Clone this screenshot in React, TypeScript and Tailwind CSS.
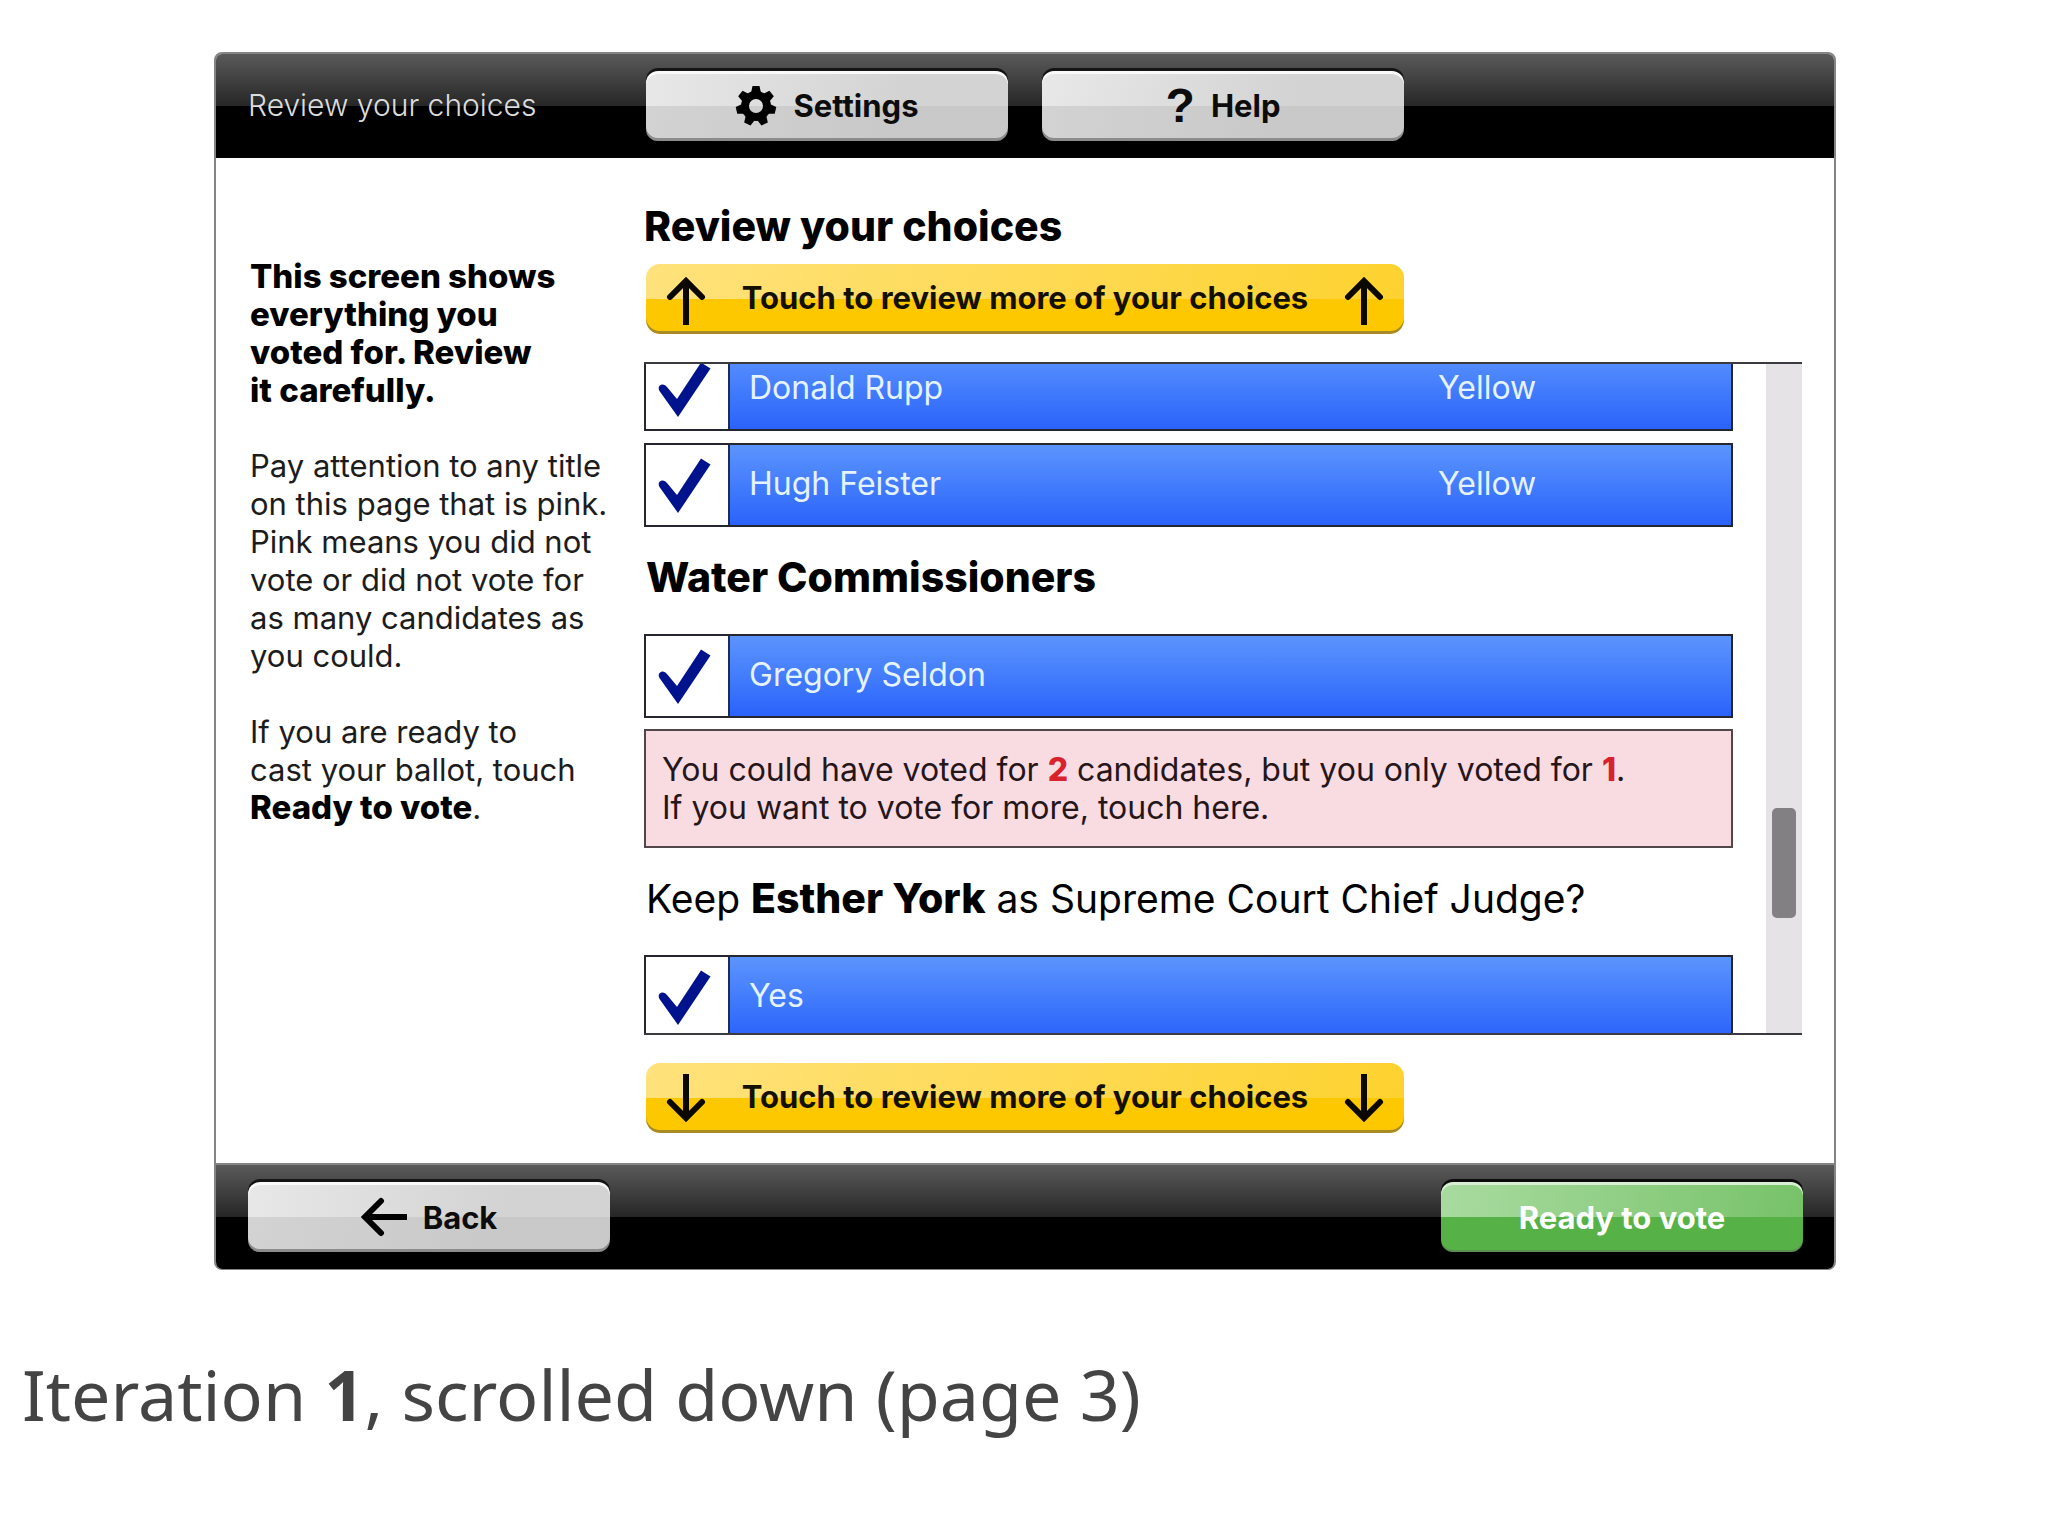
import type { ReactNode } from "react";

const teeth = Array.from({ length: 7 }, (_, i) => (i * 360) / 7);

function GearIcon() {
  return (
    <svg viewBox="0 0 42 42" className="h-[42px] w-[42px]" aria-hidden="true">
      <circle cx="21" cy="21" r="11" fill="none" stroke="#000" strokeWidth="8" />
      {teeth.map((a) => (
        <path key={a} d="M16 8 L17.5 1 H24.5 L26 8 Z" fill="#000" transform={`rotate(${a} 21 21)`} />
      ))}
    </svg>
  );
}

function BackArrow() {
  return (
    <svg viewBox="0 0 46 40" className="h-[40px] w-[46px]" fill="none" stroke="#000" strokeWidth="6" aria-hidden="true">
      <path d="M20 4 L4 20 L20 36" strokeLinecap="round" />
      <path d="M4 20 H46" />
    </svg>
  );
}

function VerticalArrow({ up }: { up?: boolean }) {
  return (
    <svg
      viewBox="0 0 40 48"
      className={up ? "mt-1 h-12 w-10" : "h-12 w-10 rotate-180"}
      fill="none"
      stroke="#0a0800"
      strokeWidth="6"
      aria-hidden="true"
    >
      <path d="M4 20 L20 4 L36 20" strokeLinecap="round" />
      <path d="M20 4 V48" />
    </svg>
  );
}

function BarButton({ children, green }: { children: ReactNode; green?: boolean }) {
  return (
    <button
      type="button"
      className={
        green
          ? "flex h-[70px] w-[362px] items-center justify-center rounded-xl bg-[linear-gradient(to_bottom,transparent_50%,#56b146_50%),linear-gradient(100deg,#a9dba0,#76c268)] text-[31px] leading-none font-bold text-white shadow-[inset_0_3px_0_#d8efd4,inset_0_-2px_0_#5c8f54,0_-3px_0_#0c0c0c]"
          : "flex h-[70px] w-[362px] items-center justify-center gap-4 rounded-xl bg-[linear-gradient(to_bottom,transparent_50%,rgba(190,190,190,0.5)_50%),linear-gradient(100deg,#e8e8e8,#d3d3d3_70%)] text-[31px] leading-none font-bold text-[#0c0c0c] shadow-[inset_0_3px_0_#fafafa,inset_0_-3px_0_#8c8c8c,0_-3px_0_#141414]"
      }
    >
      {children}
    </button>
  );
}

function MoreButton({ up }: { up?: boolean }) {
  return (
    <button
      type="button"
      className="ml-[2px] flex h-[70px] w-[758px] items-center justify-between rounded-[14px] bg-[linear-gradient(to_bottom,transparent_50%,#fdc800_50%),linear-gradient(100deg,#ffe27c,#fdd22f)] px-[20px] text-[31px] leading-none font-bold text-[#141000] shadow-[inset_0_-3px_0_#a88a26]"
    >
      <VerticalArrow up={up} />
      <span className="pb-[3px]">Touch to review more of your choices</span>
      <VerticalArrow up={up} />
    </button>
  );
}

function ChoiceRow({ name, party }: { name: string; party?: string }) {
  return (
    <label className="flex h-[84px] border-2 border-[#262630] bg-white text-[32px] text-[#e4f3ff]">
      <span className="grid w-[82px] place-items-center">
        <input type="checkbox" checked readOnly className="col-start-1 row-start-1 h-full w-full appearance-none" />
        <svg viewBox="2 1 60 60" className="pointer-events-none col-start-1 row-start-1 h-[60px] w-[60px]" aria-hidden="true">
          <path d="M4.500 33 Q2 28 7 26.500 Q10 26 12 29 L22 41 L46 4.500 L55.500 10.500 L23 59 Z" fill="#00138c" />
        </svg>
      </span>
      <span className="flex flex-1 items-center border-l-2 border-[#1c2a5c] bg-linear-to-b from-[#5c94fd] to-[#2b62fa] pb-[3px] pl-[19px]">
        <span className="flex-1">{name}</span>
        {party && <span className="w-[293px]">{party}</span>}
      </span>
    </label>
  );
}

function RaceTitle({ children }: { children: ReactNode }) {
  return <h2 className="pt-[30px] pb-[36px] pl-[2px] text-[39px] leading-[40px] text-black">{children}</h2>;
}

export default function App() {
  return (
    <div className="min-h-screen bg-white font-['Inter','Liberation_Sans',sans-serif]">
      <div className="pt-[52px] pr-[212px] pl-[214px]">
        <div className="overflow-hidden rounded-lg border-x-2 border-t-2 border-b border-[#858585] bg-white">
          <header className="flex h-[104px] items-center bg-[linear-gradient(to_bottom,#5a5a5a,#262626_50%,#000_50%)] pb-px pl-[32px]">
            <p className="w-[398px] text-[30px] font-light text-[#dcdcdc]">Review your choices</p>
            <div className="flex gap-[34px]">
              <BarButton>
                <GearIcon />
                Settings
              </BarButton>
              <BarButton>
                <span className="font-['Liberation_Sans',sans-serif] text-[48px] font-bold" aria-hidden="true">
                  ?
                </span>
                Help
              </BarButton>
            </div>
          </header>

          <main className="flex pr-[32px] pl-[34px]">
            <aside className="w-[394px] pt-[99px] text-[31px] leading-[38px] text-[#1c1c1c]">
              <p className="mb-[38px] text-[33px] font-extrabold text-black">
                This screen shows
                <br />
                everything you
                <br />
                voted for. Review
                <br />
                it carefully.
              </p>
              <p className="mb-[38px]">
                Pay attention to any title
                <br />
                on this page that is pink.
                <br />
                Pink means you did not
                <br />
                vote or did not vote for
                <br />
                as many candidates as
                <br />
                you could.
              </p>
              <p>
                If you are ready to
                <br />
                cast your ballot, touch
                <br />
                <strong className="text-[33px] leading-none font-extrabold text-black">Ready to vote</strong>.
              </p>
            </aside>

            <section className="flex-1 pt-[44px] pb-[30px]">
              <h1 className="mb-[14px] text-[41px] leading-[48px] font-extrabold text-black">Review your choices</h1>
              <MoreButton up />

              <div className="mt-[28px] mb-[28px] flex h-[673px] gap-[33px] overflow-hidden border-y-2 border-[#3a3a40]">
                <div className="-mt-[17px] flex-1">
                  <div className="flex flex-col gap-[12px]">
                    <ChoiceRow name="Donald Rupp" party="Yellow" />
                    <ChoiceRow name="Hugh Feister" party="Yellow" />
                  </div>
                  <RaceTitle>
                    <strong className="text-[41px] leading-none font-extrabold">Water Commissioners</strong>
                  </RaceTitle>
                  <div className="flex flex-col gap-[11px]">
                    <ChoiceRow name="Gregory Seldon" />
                    <button
                      type="button"
                      className="border-2 border-[#51474b] bg-[#f8dce2] px-[16px] pt-[20px] pb-[19px] text-left text-[32px] leading-[38px] text-[#26161a]"
                    >
                      You could have voted for <strong className="font-extrabold text-[#d8222c]">2</strong> candidates, but
                      you only voted for <strong className="font-extrabold text-[#d8222c]">1</strong>.
                      <br />
                      If you want to vote for more, touch here.
                    </button>
                  </div>
                  <RaceTitle>
                    Keep <strong className="text-[41px] leading-none font-extrabold">Esther York</strong> as Supreme Court
                    Chief Judge?
                  </RaceTitle>
                  <ChoiceRow name="Yes" />
                </div>
                <div className="w-[36px] bg-[#e5e3e6] px-[6px] pt-[444px]">
                  <div className="h-[110px] rounded-[5px] bg-[#828083]" />
                </div>
              </div>

              <MoreButton />
            </section>
          </main>

          <footer className="flex h-[106px] items-center justify-between border-t-2 border-[#858585] bg-[linear-gradient(to_bottom,#5a5a5a,#262626_50%,#000_50%)] pr-[31px] pl-[32px]">
            <BarButton>
              <BackArrow />
              Back
            </BarButton>
            <BarButton green>Ready to vote</BarButton>
          </footer>
        </div>
      </div>

      <p className="mt-[76px] px-[22px] font-['Noto_Sans',sans-serif] text-[70px] leading-[96px] text-[#444]">
        Iteration <strong className="font-bold">1</strong>, scrolled down (page 3)
      </p>
    </div>
  );
}
